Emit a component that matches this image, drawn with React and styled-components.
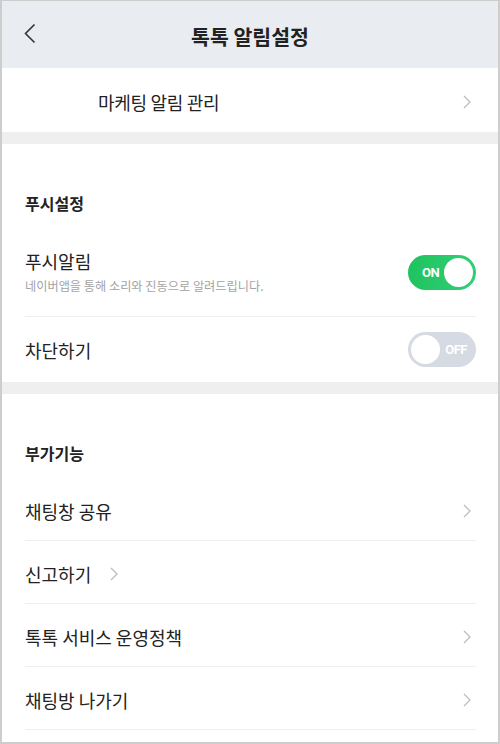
import React from "react";
import styled, { createGlobalStyle } from "styled-components";

const GlobalStyle = createGlobalStyle`
  * { box-sizing: border-box; }
  body {
    margin: 0;
    font-family: "Noto Sans CJK KR", "Noto Sans", sans-serif;
    color: #222;
    background: #fff;
  }
`;

function BackIcon() {
  return (
    <svg width="13" height="21" viewBox="0 0 13 21" fill="none">
      <path d="M11.5 1.5 L2.5 10.5 L11.5 19.5" stroke="#333" strokeWidth="1.6" />
    </svg>
  );
}

function Chevron() {
  return (
    <svg width="8" height="14" viewBox="0 0 8 14" fill="none">
      <path d="M1 1 L7 7 L1 13" stroke="#bdbdbd" strokeWidth="1.3" />
    </svg>
  );
}

function App() {
  return (
    <Frame>
      <GlobalStyle />
      <Header>
        <BackButton>
          <BackIcon />
        </BackButton>
        <Title>톡톡 알림설정</Title>
      </Header>

      <MarketingRow>
        <MarketingText>마케팅 알림 관리</MarketingText>
        <Chevron />
      </MarketingRow>

      <Gap />

      <Section>
        <SectionTitle>푸시설정</SectionTitle>
        <ToggleRow tall>
          <Texts>
            <RowText>푸시알림</RowText>
            <SubText>네이버앱을 통해 소리와 진동으로 알려드립니다.</SubText>
          </Texts>
          <Toggle on>
            <ToggleLabel>ON</ToggleLabel>
            <Knob />
          </Toggle>
        </ToggleRow>
        <ToggleRow last>
          <RowText>차단하기</RowText>
          <Toggle>
            <ToggleLabel>OFF</ToggleLabel>
            <Knob />
          </Toggle>
        </ToggleRow>
      </Section>

      <Gap />

      <Section>
        <SectionTitle>부가기능</SectionTitle>
        <LinkRow>
          <RowText>채팅창 공유</RowText>
          <Chevron />
        </LinkRow>
        <LinkRow inline>
          <RowText>신고하기</RowText>
          <Chevron />
        </LinkRow>
        <LinkRow>
          <RowText>톡톡 서비스 운영정책</RowText>
          <Chevron />
        </LinkRow>
        <LinkRow>
          <RowText>채팅방 나가기</RowText>
          <Chevron />
        </LinkRow>
      </Section>
    </Frame>
  );
}

export default App;

const Frame = styled.div`
  width: 500px;
  height: 744px;
  overflow: hidden;
  border: 2px solid #cdcdcd;
  border-top-width: 1px;
  background: #fff;
`;

const Header = styled.div`
  height: 67px;
  background: #e9ecf0;
  display: flex;
  align-items: center;
  justify-content: center;
  position: relative;
`;

const BackButton = styled.div`
  position: absolute;
  left: 21px;
  top: 22px;
  display: flex;
`;

const Title = styled.h1`
  margin: 0;
  padding-top: 2px;
  font-size: 20.5px;
  font-weight: 700;
  color: #222;
`;

const MarketingRow = styled.div`
  height: 64px;
  display: flex;
  align-items: center;
  justify-content: space-between;
  padding: 4px 27px 0 96px;
`;

const MarketingText = styled.span`
  font-size: 18px;
  letter-spacing: -0.3px;
  color: #222;
`;

const Gap = styled.div`
  height: 12px;
  background: #efefef;
`;

const Section = styled.div`
  padding: 0 22px 0 23px;
`;

const SectionTitle = styled.div`
  height: 84px;
  padding-top: 48px;
  font-size: 16px;
  line-height: 22px;
  font-weight: 700;
  color: #222;
`;

const ToggleRow = styled.div`
  height: ${(p) => (p.tall ? "89px" : "65px")};
  display: flex;
  align-items: center;
  justify-content: space-between;
  border-bottom: ${(p) => (p.last ? "none" : "1px solid #efefef")};
`;

const Texts = styled.div`
  display: flex;
  flex-direction: column;
  gap: 5px;
  padding-bottom: 2px;
`;

const RowText = styled.span`
  font-size: 18px;
  line-height: 24px;
  color: #222;
`;

const SubText = styled.span`
  font-size: 12.2px;
  line-height: 16px;
  color: #a3a3a3;
`;

const Toggle = styled.div`
  width: 68px;
  height: 35px;
  border-radius: 18px;
  display: flex;
  align-items: center;
  flex-direction: ${(p) => (p.on ? "row" : "row-reverse")};
  justify-content: space-between;
  padding: ${(p) => (p.on ? "0 3px 0 14px" : "0 9px 0 3px")};
  background: ${(p) =>
    p.on ? "linear-gradient(90deg, #1fc35e, #32cf78)" : "#d6dae3"};
`;

const ToggleLabel = styled.span`
  font-family: Roboto, "Liberation Sans", sans-serif;
  font-size: 13px;
  font-weight: 700;
  letter-spacing: -0.5px;
  color: #fff;
`;

const Knob = styled.div`
  width: 29px;
  height: 29px;
  border-radius: 50%;
  background: #fff;
`;

const LinkRow = styled.div`
  height: 63px;
  display: flex;
  align-items: center;
  justify-content: ${(p) => (p.inline ? "flex-start" : "space-between")};
  gap: 19px;
  padding: 4px 5px 0 0;
  border-bottom: 1px solid #efefef;
`;
